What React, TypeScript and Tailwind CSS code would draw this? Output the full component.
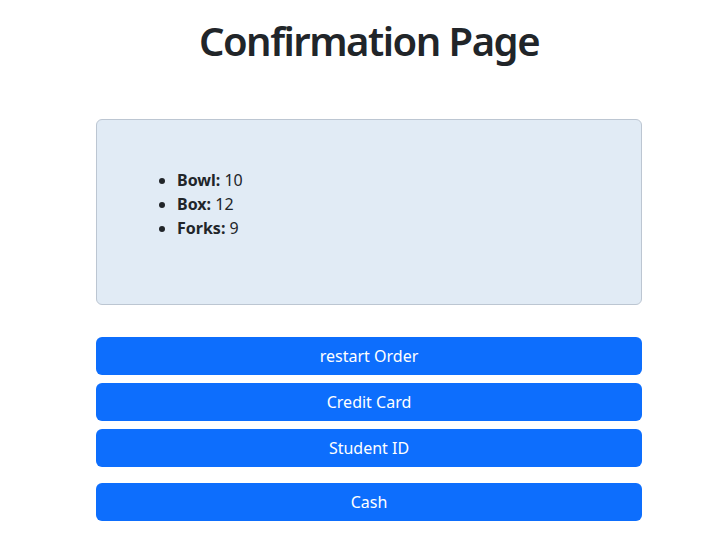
export default function App() {
  const items = [
    { name: "Bowl", qty: 10 },
    { name: "Box", qty: 12 },
    { name: "Forks", qty: 9 },
  ];
  return (
    <div
      className="min-h-[540px] bg-white text-[#212529]"
      style={{ fontFamily: '"Noto Sans", "Open Sans", sans-serif' }}
    >
      <div className="ml-[96px] flex w-[546px] flex-col">
        <h1 className="pt-[17px] text-center text-[40px] font-semibold leading-[48px] tracking-[-1.5px]">
          Confirmation Page
        </h1>
        <div className="mt-[54px] rounded-[6px] border border-[#bcc6d2] bg-[#e1ebf5] p-12">
          <ul className="mb-4 list-disc pl-8 text-[16px] leading-6">
            {items.map((it) => (
              <li key={it.name}>
                <b className="font-bold">{it.name}:</b> {it.qty}
              </li>
            ))}
          </ul>
        </div>
        <div className="mt-[32px] flex flex-col gap-2">
          {["restart Order", "Credit Card", "Student ID"].map((t) => (
            <button
              key={t}
              className="h-[38px] w-full rounded-[6px] bg-[#0d6efd] text-[16px] text-white"
            >
              {t}
            </button>
          ))}
        </div>
        <button className="mt-4 h-[38px] w-full rounded-[6px] bg-[#0d6efd] text-[16px] text-white">
          Cash
        </button>
      </div>
    </div>
  );
}
